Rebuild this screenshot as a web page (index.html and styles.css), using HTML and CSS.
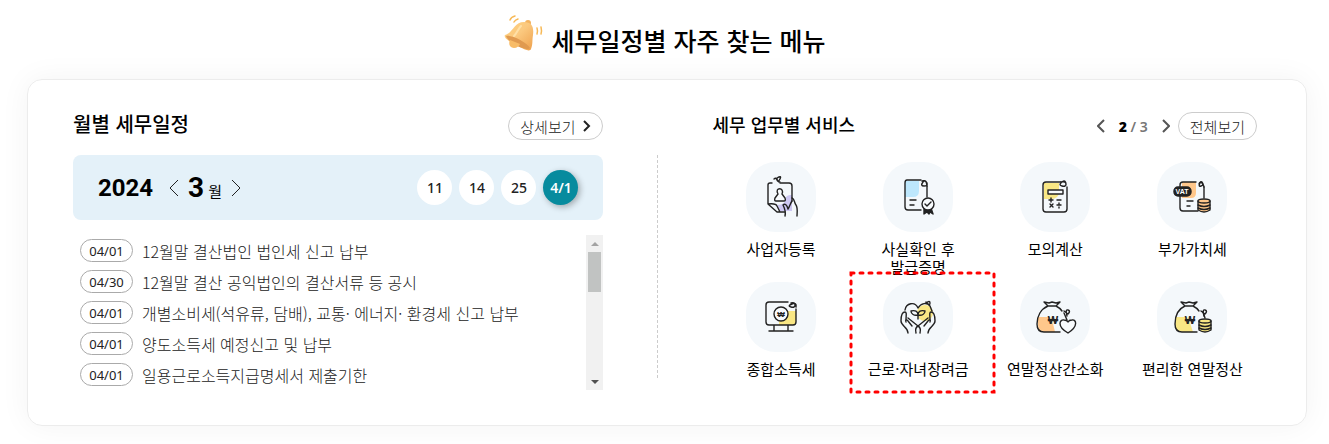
FILE: index.html
```html
<!DOCTYPE html>
<html lang="ko">
<head>
  <meta charset="UTF-8">
  <meta name="viewport" content="width=device-width, initial-scale=1.0">
  <title>세무일정별 자주 찾는 메뉴</title>
  <link rel="stylesheet" href="styles.css">
</head>
<body>
  <header class="page-title">
    <svg class="bell" viewBox="0 0 40 40" aria-hidden="true">
      <defs>
        <linearGradient id="gold" x1="0" y1="0" x2="1" y2="1">
          <stop offset="0" stop-color="#ffd07c"/>
          <stop offset=".45" stop-color="#fbc97f"/>
          <stop offset="1" stop-color="#eea04c"/>
        </linearGradient>
      </defs>
      <circle cx="25" cy="9" r="3" fill="#f3b35f"/>
      <path d="M2 21C10 19 11 8 21 8c8 0 10 5 9 13-1 6 0 9-2 14-1 3-6 1-13-3C7 28 0 24 2 21z" fill="url(#gold)"/>
      <path d="M3 22c4-2 21 6 24 12-3 4-22-5-24-12z" fill="#e09a50"/>
      <path d="M7 26c-2 4 0 8 4 8 3 0 5-2 6-4z" fill="#f8bc68"/>
      <path d="M18 12c-3 3-4 7-7 10" fill="none" stroke="#ffe0a6" stroke-width="2" stroke-linecap="round"/>
      <path d="M7 6q1-3 5-4M11 8q1-2 4-3M34 14q1 3 0 6M38 13q1 4 0 7" fill="none" stroke="#f7b956" stroke-width="1.500" stroke-linecap="round"/>
    </svg>
    <h1>세무일정별 자주 찾는 메뉴</h1>
  </header>

  <main class="card">
    <!-- 월별 세무일정 -->
    <section class="schedule">
      <div class="head">
        <h2>월별 세무일정</h2>
        <a class="more" href="#">상세보기
          <svg class="more-arrow" viewBox="0 0 8 12"><path d="M1 1l5 5-5 5"/></svg>
        </a>
      </div>

      <div class="month-bar">
        <strong class="year">2024</strong>
        <button class="month-nav" type="button" aria-label="이전 달">
          <svg viewBox="0 0 10 18"><path d="M9 1L1 9l8 8"/></svg>
        </button>
        <span class="month"><strong>3</strong>월</span>
        <button class="month-nav" type="button" aria-label="다음 달">
          <svg viewBox="0 0 10 18"><path d="M1 1l8 8-8 8"/></svg>
        </button>
        <div class="days">
          <button class="day" type="button">11</button>
          <button class="day" type="button">14</button>
          <button class="day" type="button">25</button>
          <button class="day on" type="button">4/1</button>
        </div>
      </div>

      <div class="list-wrap">
        <ul class="list">
          <li><span class="date">04/01</span><a href="#">12월말 결산법인 법인세 신고 납부</a></li>
          <li><span class="date">04/30</span><a href="#">12월말 결산 공익법인의 결산서류 등 공시</a></li>
          <li><span class="date">04/01</span><a href="#">개별소비세(석유류, 담배), 교통· 에너지· 환경세 신고 납부</a></li>
          <li><span class="date">04/01</span><a href="#">양도소득세 예정신고 및 납부</a></li>
          <li><span class="date">04/01</span><a href="#">일용근로소득지급명세서 제출기한</a></li>
        </ul>
        <div class="scroll">
          <button class="scroll-btn" type="button" aria-label="위로"><svg viewBox="0 0 8 4"><path d="M0 4l4-4 4 4z"/></svg></button>
          <div class="thumb"></div>
          <button class="scroll-btn down" type="button" aria-label="아래로"><svg viewBox="0 0 8 4"><path d="M0 0l4 4 4-4z"/></svg></button>
        </div>
      </div>
    </section>

    <div class="divider"></div>

    <!-- 세무 업무별 서비스 -->
    <section class="service">
      <div class="head">
        <h2 class="small">세무 업무별 서비스</h2>
        <div class="pager">
          <button class="page-nav" type="button" aria-label="이전"><svg viewBox="0 0 8 14"><path d="M7 1L1 7l6 6"/></svg></button>
          <span class="page"><b>2</b> / 3</span>
          <button class="page-nav" type="button" aria-label="다음"><svg viewBox="0 0 8 14"><path d="M1 1l6 6-6 6"/></svg></button>
          <a class="more" href="#">전체보기</a>
        </div>
      </div>

      <div class="menu">
        <a class="item" href="#">
          <svg class="icon" viewBox="0 0 70 70">
            <path class="purple" d="M46 33v16H34c-1-2-2-4-3-6 6 0 9-3 9-8 2-2 4-2 6-2z"/>
            <path d="M26 21h-2q-2 0-2 2v19l9 8h8M34 21h9q3 0 3 3v15M22 42q8-1 9 2l3 6"/>
            <path class="paper" d="M30 39q-2 0-1-3l3-4c-4-7 7-7 4 0l3 4q1 3-1 3z"/>
            <path d="M28 17q2-2 3 1t3-1-3-1q0 4 3 4M46 39c-2 3-2 5-4 8M39 54c1-4-1-9-2-11 2-2 4 0 5 4M46 36c3 1 2 5 4 7 2 3 1 8 1 11"/>
          </svg>
          <span class="label">사업자등록</span>
        </a>
        <a class="item" href="#">
          <svg class="icon" viewBox="0 0 70 70">
            <path class="blue" d="M22 19h14v10q0 6-6 6h-8z"/>
            <path d="M38 18H24q-2 0-2 3v24q0 3 3 3h13M44 24v11M27 38h6M27 43h4"/>
            <path d="M39 19q4-1 5 2t-3 3-1-4 4 4"/>
            <path class="ink" d="M41 46v6l3-2 2 2 1-2 3 2-2-6z"/>
            <circle class="paper" cx="45" cy="42" r="6"/>
            <path d="M42 42l2 2 4-4"/>
          </svg>
          <span class="label">사실확인 후<br>발급증명</span>
        </a>
        <a class="item" href="#">
          <svg class="icon" viewBox="0 0 70 70">
            <path class="yellow" d="M24 21h15v8q0 8-8 8h-7z"/>
            <path d="M41 20H26q-3 0-3 3v24q0 3 3 3h18q3 0 3-3V25"/>
            <path d="M41 20q5-1 5 2t-4 2 0-4 4 3"/>
            <path class="paper" d="M28 28h15v4H28z"/>
            <path d="M29 38h4M31 36v4M37 38h4M30 42l3 3M33 42l-3 3M37 43h4M39 41v1M39 45v1"/>
          </svg>
          <span class="label">모의계산</span>
        </a>
        <a class="item" href="#">
          <svg class="icon" viewBox="0 0 70 70">
            <path class="orange" d="M25 20h14v11q0 5-5 5h-9z"/>
            <path d="M39 20H26q-3 0-3 3v23q0 3 3 3h15M47 25v11M30 39h6M30 44h3"/>
            <path d="M42 22q1-3 3-1t-1 3-1-3 4 4"/>
            <rect class="ink" x="17" y="25" width="17" height="9" rx="4"/>
            <text class="vat" x="25" y="32">VAT</text>
            <path class="coin" d="M41 39v9q6 4 12 0v-9"/>
            <ellipse class="coin" cx="47" cy="39" rx="6" ry="2"/>
            <path d="M41 43q6 3 12 0M41 46q6 3 12 0"/>
          </svg>
          <span class="label">부가가치세</span>
        </a>
        <a class="item" href="#">
          <svg class="icon" viewBox="0 0 70 70">
            <path class="yellow" d="M33 43V32q6 0 8-3h9v11q0 3-3 3z"/>
            <path d="M42 20H23q-3 0-3 3v17q0 3 3 3h24q3 0 3-3V27M28 43v6M42 43v6M23 49h24"/>
            <path d="M45 21q4-1 4 2t-4 2 1-3 4 3"/>
            <circle class="paper" cx="35" cy="32" r="7"/>
            <text class="won small-won" x="35" y="35">₩</text>
          </svg>
          <span class="label">종합소득세</span>
        </a>
        <a class="item marked" href="#">
          <svg class="icon" viewBox="0 0 70 70">
            <circle class="yellow" cx="42" cy="31" r="8"/>
            <path d="M22 28c1-7 10-9 13-2M35 26c3-5 9-6 12-2l2 5M43 21q4-3 4 0t-3 0 3 3"/>
            <path d="M25 51c0-6-7-7-7-12 0-4 1-9 4-9 2 0 1 4 1 8M45 51c0-6 7-7 7-12 0-4-1-9-4-9-2 0-1 4-1 8"/>
            <path d="M29 44l-4-5c-1-2-3-1-2 1M41 44l4-5c1-2 3-1 2 1M25 36l10 8 10-8M35 44c-2 1-3 3-2 7M35 44c2 1 3 3 2 7"/>
            <path d="M35 37v-4c-4 1-7-1-7-4 4-1 7 0 7 4 0-4 3-5 7-4 0 3-3 5-7 4"/>
          </svg>
          <span class="label">근로·자녀장려금</span>
          <svg class="mark" aria-hidden="true"><rect x="2" y="2" width="143" height="119"/></svg>
        </a>
        <a class="item" href="#">
          <svg class="icon" viewBox="0 0 70 70">
            <path class="orange" d="M18 35h12q4 7 5 15H24q-6 0-6-7z"/>
            <path d="M28 24l-4-4 5 1 3-1 4 1 4-1-4 4zM28 24C21 27 17 34 17 42q0 8 7 8h16M36 24q4 2 6 5M47 38l-3-7"/>
            <path d="M44 29l4 3q3-3 0-4t-1 6"/>
            <path class="paper" d="M48 51C36 44 40 37 44 38q3 0 4 2 1-2 4-2c4-1 7 6-4 13z"/>
            <text class="won" x="33" y="42">₩</text>
          </svg>
          <span class="label">연말정산간소화</span>
        </a>
        <a class="item" href="#">
          <svg class="icon" viewBox="0 0 70 70">
            <path class="yellow" d="M18 35h12q4 7 6 15H24q-6 0-6-7z"/>
            <path d="M28 24l-4-4 5 1 3-1 4 1 4-1-4 4zM28 24C21 27 18 34 18 42q0 8 7 8h15M36 24q4 2 6 5M48 36l-2-6"/>
            <path d="M44 29l4 3q3-3 0-4t-1 6"/>
            <path class="coin gold" d="M42 39v9q6 4 12 0v-9"/>
            <ellipse class="coin gold" cx="48" cy="39" rx="6" ry="2"/>
            <path d="M42 43q6 3 12 0M42 46q6 3 12 0"/>
            <text class="won" x="33" y="42">₩</text>
          </svg>
          <span class="label">편리한 연말정산</span>
        </a>
      </div>
    </section>
  </main>
</body>
</html>
```
FILE: styles.css
```css
* {
  box-sizing: border-box;
}

body {
  margin: 0;
  background: #fff;
  color: #000;
  font-family: "Noto Sans CJK KR", sans-serif;
  font-size: 15px;
  font-weight: 300;
  overflow-x: hidden;
}

h1, h2, ul {
  margin: 0;
  padding: 0;
}

a {
  color: inherit;
  text-decoration: none;
}

button {
  padding: 0;
  border: 0;
  background: none;
  color: inherit;
  font: inherit;
  cursor: pointer;
}

/* 제목 */
.page-title {
  display: flex;
  justify-content: center;
  gap: 8px;
  height: 79px;
  padding-top: 14px;
}

.bell {
  width: 40px;
  height: 40px;
}

h1 {
  font-size: 25px;
  font-weight: 500;
  line-height: 52px;
}

h2 {
  font-size: 20px;
  font-weight: 500;
  line-height: 24px;
}

h2.small {
  font-size: 18px;
}

/* 카드 */
.card {
  display: grid;
  grid-template-columns: 530fr 1px 548fr;
  column-gap: 54px;
  margin: 0 22px 18px 27px;
  padding: 32px 45px 35px;
  border: 1px solid #ececec;
  border-radius: 15px;
  box-shadow: 0 0 30px rgba(0, 0, 0, 0.05);
}

.head {
  display: flex;
  justify-content: space-between;
  height: 28px;
}

.more {
  display: flex;
  align-items: center;
  gap: 8px;
  height: 28px;
  padding: 0 11px;
  border: 1px solid #ccc;
  border-radius: 14px;
  color: #222;
  font-size: 15px;
}

.more-arrow {
  width: 8px;
  height: 12px;
  fill: none;
  stroke: #222;
  stroke-width: 2;
}

.divider {
  margin: 43px 0 10px;
  background: repeating-linear-gradient(#ccc 0 3px, transparent 3px 5px);
}

/* 월 선택 */
.month-bar {
  display: flex;
  align-items: center;
  height: 65px;
  margin-top: 15px;
  padding: 0 25px;
  border-radius: 8px;
  background: #e4f1f9;
}

.year {
  margin-right: 16px;
  font-family: Roboto, sans-serif;
  font-size: 24px;
  font-weight: 700;
}

.month-nav {
  width: 10px;
  height: 18px;
}

.month-nav svg {
  display: block;
  fill: none;
  stroke: #222;
}

.month {
  display: flex;
  align-items: baseline;
  gap: 4px;
  margin: 0 9px;
  font-weight: 400;
}

.month strong {
  font-family: Roboto, sans-serif;
  font-size: 28px;
  font-weight: 700;
}

.days {
  display: flex;
  gap: 7px;
  margin-left: auto;
}

.day {
  width: 35px;
  height: 35px;
  border-radius: 50%;
  background: #fff;
  color: #222;
  font-family: "Noto Sans", sans-serif;
  font-size: 14px;
  font-weight: 500;
}

.day.on {
  background: #078b9e;
  box-shadow: 2px 2px 6px rgba(0, 0, 0, 0.3);
  color: #fff;
  font-weight: 600;
}

/* 일정 목록 */
.list-wrap {
  display: flex;
  margin-top: 15px;
}

.list {
  flex: 1;
  padding-left: 7px;
  list-style: none;
}

.list li {
  display: flex;
  align-items: center;
  gap: 9px;
  height: 31px;
  color: #222;
  font-size: 16px;
  line-height: 22px;
}

.date {
  width: 53px;
  height: 23px;
  border: 1px solid #aaa;
  border-radius: 12px;
  font-family: "Noto Sans", sans-serif;
  font-size: 13px;
  font-weight: 400;
  line-height: 22px;
  text-align: center;
}

.scroll {
  display: flex;
  flex-direction: column;
  width: 17px;
  background: #f1f1f1;
}

.scroll-btn {
  display: flex;
  align-items: center;
  justify-content: center;
  height: 17px;
}

.scroll-btn svg {
  width: 8px;
  height: 4px;
  fill: #a3a3a3;
}

.scroll-btn.down {
  margin-top: auto;
}

.scroll-btn.down svg {
  fill: #505050;
}

.thumb {
  height: 40px;
  margin: 0 2px;
  background: #c1c3c2;
}

/* 페이지 */
.pager {
  display: flex;
  align-items: center;
  padding-right: 4px;
}

.page-nav {
  width: 8px;
  height: 14px;
}

.page-nav svg {
  display: block;
  fill: none;
  stroke: #555;
  stroke-width: 2;
}

.page {
  margin: 0 14px;
  color: #777;
  font-family: "Noto Sans", sans-serif;
  font-size: 14px;
  font-weight: 600;
}

.page b {
  color: #000;
}

.pager .more {
  margin-left: 8px;
}

/* 서비스 메뉴 */
.menu {
  display: grid;
  grid-template-columns: repeat(4, 1fr);
  row-gap: 6px;
  margin-top: 22px;
}

.item {
  position: relative;
  display: flex;
  flex-direction: column;
  align-items: center;
  gap: 8px;
}

.label {
  font-weight: 400;
  line-height: 18px;
  text-align: center;
  white-space: nowrap;
}

.icon {
  width: 70px;
  height: 70px;
  border-radius: 30px;
  background: #f4f8fb;
  fill: none;
  stroke: #222;
  stroke-width: 1.4;
  stroke-linecap: round;
  stroke-linejoin: round;
}

.icon .purple { fill: #cdc7f2; stroke: none; }
.icon .blue { fill: #bde7fc; stroke: none; }
.icon .yellow { fill: #f9e784; stroke: none; }
.icon .orange { fill: #ffc78b; stroke: none; }
.icon .ink { fill: #222; }
.icon .paper { fill: #f8fbfd; }
.icon .coin { fill: #ffc78b; }
.icon .gold { fill: #f9e784; }

.icon text {
  stroke: none;
  text-anchor: middle;
  font-weight: 700;
}

.icon .vat {
  fill: #fff;
  font-family: "Liberation Sans", sans-serif;
  font-size: 7px;
}

.icon .won {
  fill: #222;
  font-family: "Liberation Sans", sans-serif;
  font-size: 11px;
}

.icon .small-won {
  font-size: 8px;
}

/* 강조 표시 */
.mark {
  position: absolute;
  top: -11px;
  left: -1px;
  width: 147px;
  height: 123px;
  fill: none;
  stroke: #f00;
  stroke-width: 3;
  stroke-dasharray: 3 6;
  stroke-linecap: round;
}
```
